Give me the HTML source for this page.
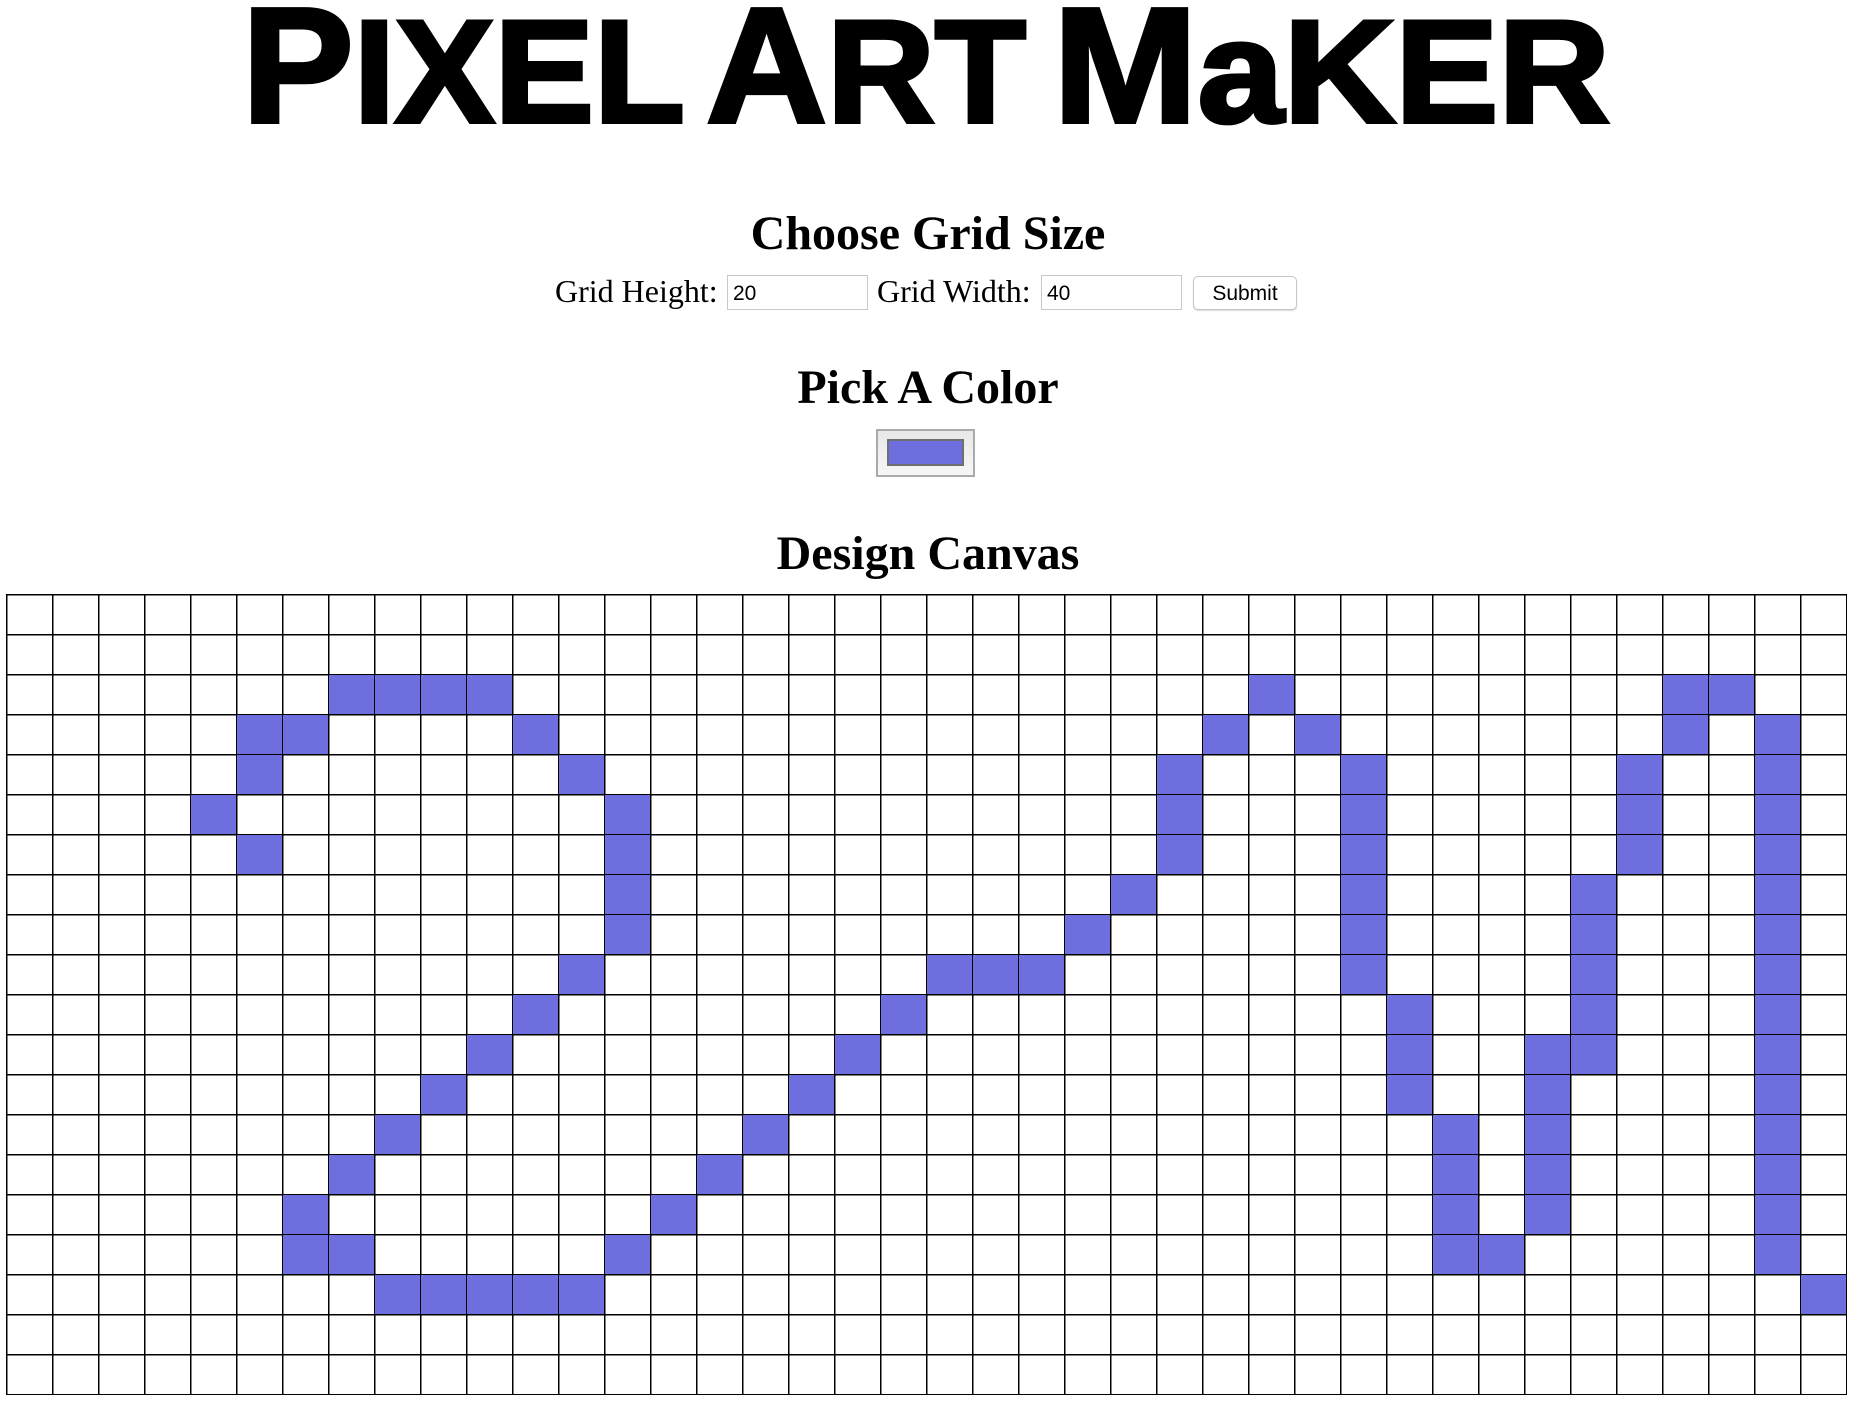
<!DOCTYPE html>
<html><head><meta charset="utf-8"><style>
html,body{margin:0;padding:0;background:#fff;width:1856px;height:1402px;overflow:hidden;position:relative}
.h{position:absolute;left:0;width:1856px;text-align:center;font-family:"Liberation Serif",serif;font-weight:bold;font-size:48px;line-height:48px;color:#000;margin:0}
.lbl{position:absolute;font-family:"Liberation Serif",serif;font-size:32px;line-height:34px;top:274px}
.inp{position:absolute;top:275px;border:1px solid #c8c8c8;box-sizing:border-box;width:141px;height:35px;font-family:"Liberation Sans",sans-serif;font-size:21px;line-height:35px;padding-left:5px}
.btn{position:absolute;left:1193px;top:276px;width:104px;height:34px;box-sizing:border-box;border:1px solid #c6c6c6;border-radius:5px;background:#fff;font-family:"Liberation Sans",sans-serif;font-size:21px;line-height:34px;text-align:center;box-shadow:0 1px 1px rgba(0,0,0,.15)}
#g{position:absolute;left:6px;top:594px;width:1841px;height:801px;
background-image:linear-gradient(to right,#000 0,#000 1.3px,transparent 1.3px),linear-gradient(to bottom,#000 0,#000 1.3px,transparent 1.3px);
background-size:46px 100%,100% 40px;}
#c{position:absolute;left:6px;top:594px;display:grid;grid-template-columns:repeat(40,46px);grid-template-rows:repeat(20,40px)}
#c div{background:#6e6edf;margin:1px 0 0 1px}
</style></head><body>
<svg width="1856" height="140" style="position:absolute;left:0;top:0" xmlns="http://www.w3.org/2000/svg">
<g font-family="Liberation Sans, sans-serif" font-weight="bold" fill="#000" stroke="#000" stroke-width="4">
<text x="242" y="122" textLength="443" lengthAdjust="spacingAndGlyphs"><tspan font-size="164">P</tspan><tspan font-size="146">IXEL</tspan></text>
<text x="706" y="122" textLength="320" lengthAdjust="spacingAndGlyphs"><tspan font-size="164">A</tspan><tspan font-size="146">RT</tspan></text>
<text x="1053" y="122" textLength="557" lengthAdjust="spacingAndGlyphs"><tspan font-size="164">M</tspan><tspan font-size="146">aKER</tspan></text>
</g></svg>
<div class="h" style="top:210px">Choose Grid Size</div>
<div class="lbl" style="left:555px">Grid Height:</div>
<div class="inp" style="left:727px">20</div>
<div class="lbl" style="left:877px">Grid Width:</div>
<div class="inp" style="left:1041px">40</div>
<div class="btn">Submit</div>
<div class="h" style="top:364px">Pick A Color</div>
<div style="position:absolute;left:876px;top:429px;width:99px;height:48px;box-sizing:border-box;border:2px solid #aaa;background:linear-gradient(#e8e8e8,#f6f6f6)"><div style="position:absolute;left:9px;top:8px;width:77px;height:27px;box-sizing:border-box;border:2px solid #6f6f6f;background:#6e6edf"></div></div>
<div class="h" style="top:530px">Design Canvas</div>
<div id="g"></div>
<div id="c">
<div style="grid-area:3/8"></div><div style="grid-area:3/9"></div><div style="grid-area:3/10"></div><div style="grid-area:3/11"></div><div style="grid-area:3/28"></div><div style="grid-area:3/37"></div><div style="grid-area:3/38"></div>
<div style="grid-area:4/6"></div><div style="grid-area:4/7"></div><div style="grid-area:4/12"></div><div style="grid-area:4/27"></div><div style="grid-area:4/29"></div><div style="grid-area:4/37"></div><div style="grid-area:4/39"></div>
<div style="grid-area:5/6"></div><div style="grid-area:5/13"></div><div style="grid-area:5/26"></div><div style="grid-area:5/30"></div><div style="grid-area:5/36"></div><div style="grid-area:5/39"></div>
<div style="grid-area:6/5"></div><div style="grid-area:6/14"></div><div style="grid-area:6/26"></div><div style="grid-area:6/30"></div><div style="grid-area:6/36"></div><div style="grid-area:6/39"></div>
<div style="grid-area:7/6"></div><div style="grid-area:7/14"></div><div style="grid-area:7/26"></div><div style="grid-area:7/30"></div><div style="grid-area:7/36"></div><div style="grid-area:7/39"></div>
<div style="grid-area:8/14"></div><div style="grid-area:8/25"></div><div style="grid-area:8/30"></div><div style="grid-area:8/35"></div><div style="grid-area:8/39"></div>
<div style="grid-area:9/14"></div><div style="grid-area:9/24"></div><div style="grid-area:9/30"></div><div style="grid-area:9/35"></div><div style="grid-area:9/39"></div>
<div style="grid-area:10/13"></div><div style="grid-area:10/21"></div><div style="grid-area:10/22"></div><div style="grid-area:10/23"></div><div style="grid-area:10/30"></div><div style="grid-area:10/35"></div><div style="grid-area:10/39"></div>
<div style="grid-area:11/12"></div><div style="grid-area:11/20"></div><div style="grid-area:11/31"></div><div style="grid-area:11/35"></div><div style="grid-area:11/39"></div>
<div style="grid-area:12/11"></div><div style="grid-area:12/19"></div><div style="grid-area:12/31"></div><div style="grid-area:12/34"></div><div style="grid-area:12/35"></div><div style="grid-area:12/39"></div>
<div style="grid-area:13/10"></div><div style="grid-area:13/18"></div><div style="grid-area:13/31"></div><div style="grid-area:13/34"></div><div style="grid-area:13/39"></div>
<div style="grid-area:14/9"></div><div style="grid-area:14/17"></div><div style="grid-area:14/32"></div><div style="grid-area:14/34"></div><div style="grid-area:14/39"></div>
<div style="grid-area:15/8"></div><div style="grid-area:15/16"></div><div style="grid-area:15/32"></div><div style="grid-area:15/34"></div><div style="grid-area:15/39"></div>
<div style="grid-area:16/7"></div><div style="grid-area:16/15"></div><div style="grid-area:16/32"></div><div style="grid-area:16/34"></div><div style="grid-area:16/39"></div>
<div style="grid-area:17/7"></div><div style="grid-area:17/8"></div><div style="grid-area:17/14"></div><div style="grid-area:17/32"></div><div style="grid-area:17/33"></div><div style="grid-area:17/39"></div>
<div style="grid-area:18/9"></div><div style="grid-area:18/10"></div><div style="grid-area:18/11"></div><div style="grid-area:18/12"></div><div style="grid-area:18/13"></div><div style="grid-area:18/40"></div>
</div>
</body></html>
